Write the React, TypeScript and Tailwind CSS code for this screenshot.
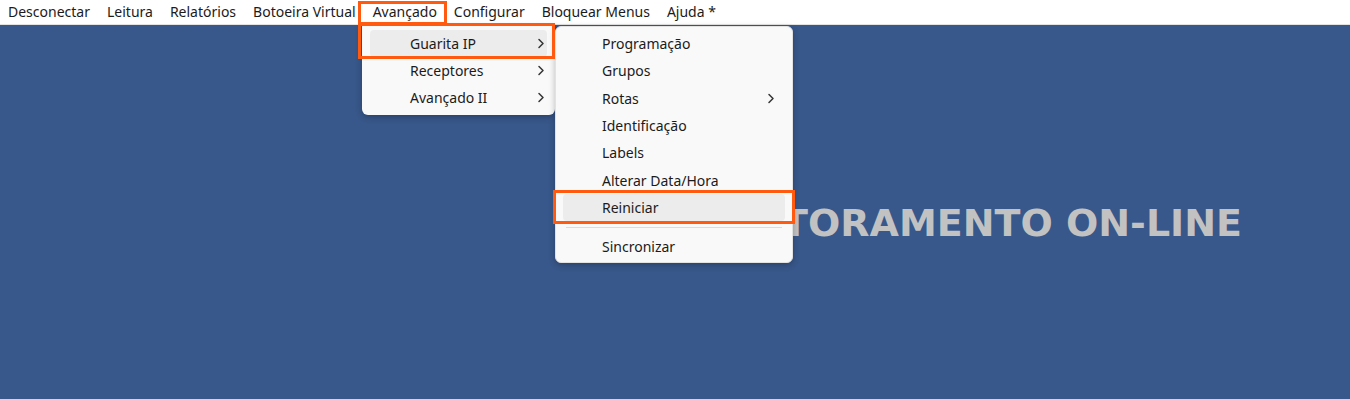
const topMenu = [
  "Desconectar",
  "Leitura",
  "Relatórios",
  "Botoeira Virtual",
  "Avançado",
  "Configurar",
  "Bloquear Menus",
  "Ajuda *",
];

const subItems = [
  { label: "Programação" },
  { label: "Grupos" },
  { label: "Rotas", arrow: true },
  { label: "Identificação" },
  { label: "Labels" },
  { label: "Alterar Data/Hora" },
  { label: "Reiniciar", active: true },
];

function Chevron() {
  return (
    <svg width="8" height="11" viewBox="0 0 8 11" fill="none" className="text-[#333]">
      <path d="M2 1.5l4 4-4 4" stroke="currentColor" strokeWidth="1.5" strokeLinecap="round" strokeLinejoin="round" />
    </svg>
  );
}

export default function App() {
  return (
    <div
      className="relative h-[399px] w-[1350px] overflow-hidden bg-[#38578a] text-[#1b1b1b]"
      style={{ fontFamily: '"Noto Sans", "Open Sans", sans-serif' }}
    >
      {/* menu bar */}
      <nav className="flex h-[25px] items-center gap-[17px] border-b border-[#e3e3e3] bg-white pl-[8px] text-[14px]">
        {topMenu.map((m) => (
          <span key={m} className="leading-none">
            {m}
          </span>
        ))}
      </nav>

      {/* main area */}
      <div className="flex h-[374px] justify-end pr-[108px] pt-[179px]">
        <h1
          className="text-[38px] font-bold leading-none text-[#c2c2c2]"
          style={{ fontFamily: '"DejaVu Sans", Verdana, sans-serif' }}
        >
          MONITORAMENTO ON-LINE
        </h1>
      </div>

      {/* first dropdown */}
      <div className="absolute left-[362px] top-[25px] flex h-[90px] w-[193px] flex-col rounded-b-[6px] bg-[#f9f9f9] pt-[5px] text-[14px] shadow-[0_2px_6px_rgba(0,0,0,0.25)]">
        {["Guarita IP", "Receptores", "Avançado II"].map((t, i) => (
          <div
            key={t}
            className={`mx-[8px] flex h-[27px] items-center justify-between rounded-[4px] pl-[40px] pr-[2px] ${
              i === 0 ? "bg-[#ececec]" : ""
            }`}
          >
            <span>{t}</span>
            <Chevron />
          </div>
        ))}
      </div>

      {/* submenu */}
      <div className="absolute left-[555px] top-[26px] flex h-[237px] w-[238px] flex-col rounded-[6px] border border-[#e2e2e2] bg-[#f9f9f9] pt-[3px] text-[14px] shadow-[0_2px_6px_rgba(0,0,0,0.25)]">
        {subItems.map((s) => (
          <div
            key={s.label}
            className={`mx-[7px] flex h-[27.3px] items-center justify-between rounded-[4px] pl-[39px] pr-[10px] ${
              s.active ? "bg-[#ececec]" : ""
            }`}
          >
            <span>{s.label}</span>
            {s.arrow && <Chevron />}
          </div>
        ))}
        <div className="flex h-[12px] items-center px-[10px]">
          <div className="h-px w-full bg-[#dcdcdc]" />
        </div>
        <div className="mx-[7px] flex h-[27px] items-center pl-[39px]">
          <span>Sincronizar</span>
        </div>
      </div>

      {/* highlight boxes */}
      <div className="pointer-events-none absolute left-[358px] top-[1px] h-[24px] w-[89px] border-[3px] border-[#ff5a0f]" />
      <div className="pointer-events-none absolute left-[358px] top-[23px] h-[36px] w-[197px] border-[3px] border-[#ff5a0f]" />
      <div className="pointer-events-none absolute left-[553px] top-[190px] h-[34px] w-[242px] border-[3px] border-[#ff5a0f]" />
    </div>
  );
}
